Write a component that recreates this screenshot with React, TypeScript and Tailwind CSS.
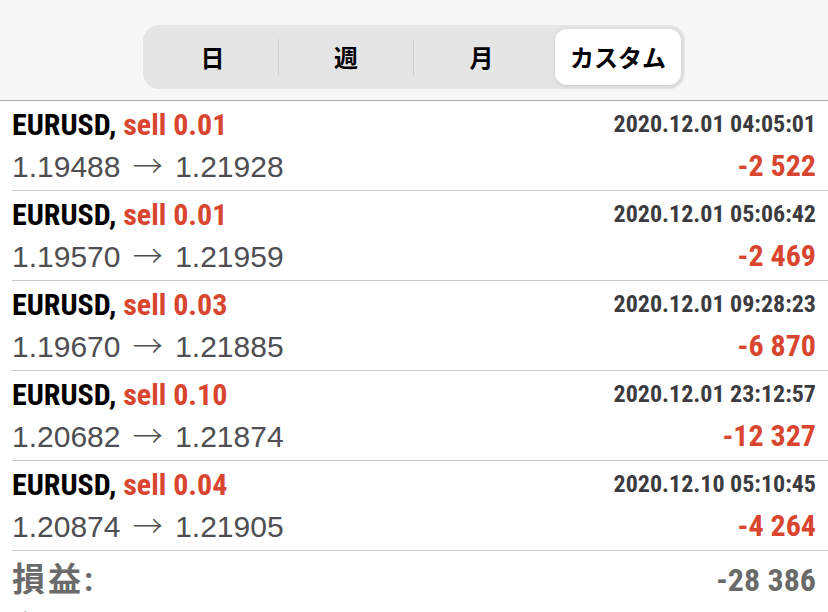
const deals = [
  { lot: "0.01", time: "2020.12.01 04:05:01", open: "1.19488", close: "1.21928", profit: "-2 522" },
  { lot: "0.01", time: "2020.12.01 05:06:42", open: "1.19570", close: "1.21959", profit: "-2 469" },
  { lot: "0.03", time: "2020.12.01 09:28:23", open: "1.19670", close: "1.21885", profit: "-6 870" },
  { lot: "0.10", time: "2020.12.01 23:12:57", open: "1.20682", close: "1.21874", profit: "-12 327" },
  { lot: "0.04", time: "2020.12.10 05:10:45", open: "1.20874", close: "1.21905", profit: "-4 264" },
];

const cond = "font-['Roboto_Condensed','Noto_Sans_CJK_JP',sans-serif] font-bold";

export default function App() {
  return (
    <div className="w-[828px] h-[612px] overflow-hidden bg-white">
      <div className="h-[101px] bg-[#f7f7f7] border-b border-[#a9a9a9] flex items-start justify-center pt-[25px]">
        <div className="w-[542px] h-[64px] rounded-[16px] bg-[#e5e5e6] p-[4px] flex items-center font-['Noto_Sans_CJK_JP',sans-serif] font-bold text-[24px] text-black">
          <div className="w-[131px] text-center">日</div>
          <div className="w-px h-[36px] bg-[#cfcfd1]" />
          <div className="w-[134px] text-center">週</div>
          <div className="w-px h-[36px] bg-[#cfcfd1]" />
          <div className="w-[135px] text-center">月</div>
          <div className="ml-auto w-[126px] h-full flex items-center justify-center bg-white rounded-[12px] shadow-[0_1px_4px_rgba(0,0,0,0.12)]">
            カスタム
          </div>
        </div>
      </div>

      {deals.map((d) => (
        <div key={d.time} className="ml-[12px] h-[90px] border-b border-[#c8c8ca] pr-[12px] pt-[4px]">
          <div className="flex items-center justify-between h-[38px]">
            <div className={`${cond} text-[30px] text-black`}>
              EURUSD, <span className="text-[#d9452f]">sell {d.lot}</span>
            </div>
            <div className={`${cond} text-[24px] text-[#3c3c40]`}>{d.time}</div>
          </div>
          <div className="flex items-center justify-between h-[44px]">
            <div className="font-['Liberation_Sans',sans-serif] text-[30px] text-[#4e4e53]">
              {d.open} <span className="font-['Noto_Sans_CJK_JP',sans-serif] font-light px-[4px]">→</span> {d.close}
            </div>
            <div className={`${cond} text-[30px] text-[#d9452f]`}>{d.profit}</div>
          </div>
        </div>
      ))}

      <div className="ml-[12px] pr-[12px] pt-[8px]">
        <div className="flex items-center justify-between h-[42px] text-[#6a6a6a]">
          <div className={`${cond} text-[33px] tracking-[3px]`}>損益:</div>
          <div className={`${cond} text-[32px]`}>-28 386</div>
        </div>
        <div className="flex items-center h-[48px] text-[#6a6a6a]">
          <div className={`${cond} text-[30px]`}>クレジット:</div>
        </div>
      </div>
    </div>
  );
}
